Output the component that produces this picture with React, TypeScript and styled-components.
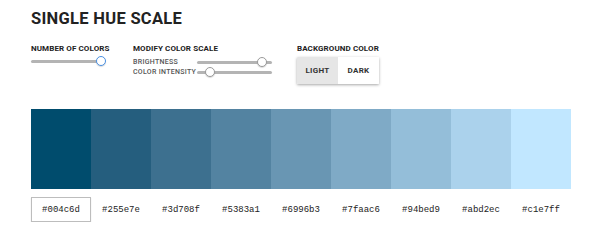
import styled, { createGlobalStyle } from "styled-components";

const colors = ["#004c6d", "#255e7e", "#3d708f", "#5383a1", "#6996b3", "#7faac6", "#94bed9", "#abd2ec", "#c1e7ff"];

const Global = createGlobalStyle`
  body {
    margin: 0;
    background: #ffffff;
    font-family: Roboto, "Liberation Sans", sans-serif;
    color: #222;
  }
`;

const Page = styled.div`
  padding: 9px 0 0 31px;
  width: 610px;
  box-sizing: border-box;
`;

const Title = styled.h1`
  margin: 0;
  font-size: 16.5px;
  font-weight: 700;
  letter-spacing: 0.3px;
  line-height: 20px;
  color: #222;
`;

const Controls = styled.div`
  display: flex;
  margin-top: 15px;
  height: 44px;
`;

const Group = styled.div<{ $w: number }>`
  width: ${({ $w }) => $w}px;
  display: flex;
  flex-direction: column;
`;

const Label = styled.div`
  font-size: 8px;
  font-weight: 700;
  letter-spacing: 0.1px;
  line-height: 10px;
  color: #222;
  white-space: nowrap;
`;

const SubGrid = styled.div`
  display: grid;
  grid-template-columns: auto 75px;
  grid-auto-rows: 10px;
  column-gap: 1px;
  align-items: center;
  justify-content: start;
  margin-top: 3px;
`;

const SubLabel = styled.div`
  font-size: 7px;
  letter-spacing: 0.3px;
  line-height: 10px;
  color: #555;
  font-weight: 500;
  white-space: nowrap;
`;

const Track = styled.div<{ $w: number }>`
  position: relative;
  width: ${({ $w }) => $w}px;
  height: 3px;
  border-radius: 2px;
  background: #b4b4b4;
`;

const Thumb = styled.div<{ $active?: boolean }>`
  position: absolute;
  top: -4px;
  width: 10px;
  height: 10px;
  margin-left: -5px;
  border-radius: 50%;
  box-sizing: border-box;
  background: #fff;
  border: ${({ $active }) => ($active ? "1.6px solid #4a90e2" : "1px solid #9a9a9a")};
  box-shadow: 0 1px 1px rgba(0, 0, 0, 0.15);
`;

const Toggle = styled.div`
  display: flex;
  margin-top: 3px;
  width: 82px;
  height: 27px;
  box-shadow: 0 1px 3px rgba(0, 0, 0, 0.35);
  border-radius: 1px;
  overflow: hidden;
`;

const ToggleBtn = styled.div<{ $on?: boolean }>`
  flex: 1;
  display: flex;
  align-items: center;
  justify-content: center;
  font-size: 8px;
  font-weight: 700;
  letter-spacing: 0.3px;
  color: #333;
  background: ${({ $on }) => ($on ? "#e6e6e6" : "#ffffff")};
`;

const Swatches = styled.div`
  display: flex;
  margin-top: 21px;
`;

const Swatch = styled.div<{ $c: string }>`
  width: 60px;
  height: 80px;
  background: ${({ $c }) => $c};
`;

const Codes = styled.div`
  display: flex;
  margin-top: 8px;
`;

const Code = styled.div<{ $sel?: boolean }>`
  width: 60px;
  height: 25px;
  box-sizing: border-box;
  display: flex;
  align-items: center;
  justify-content: center;
  font-family: "Liberation Mono", "DejaVu Sans Mono", monospace;
  font-size: 9px;
  color: #222;
  border: 1px solid ${({ $sel }) => ($sel ? "#bdbdbd" : "transparent")};
  box-shadow: ${({ $sel }) => ($sel ? "0 1px 1px rgba(0,0,0,0.15)" : "none")};
`;

export default function App() {
  return (
    <Page>
      <Global />
      <Title>SINGLE HUE SCALE</Title>
      <Controls>
        <Group $w={102}>
          <Label>NUMBER OF COLORS</Label>
          <Track $w={70} style={{ marginTop: 6 }}>
            <Thumb $active style={{ left: "100%" }} />
          </Track>
        </Group>
        <Group $w={164}>
          <Label>MODIFY COLOR SCALE</Label>
          <SubGrid>
            <SubLabel>BRIGHTNESS</SubLabel>
            <Track $w={75}>
              <Thumb style={{ left: "86%" }} />
            </Track>
            <SubLabel>COLOR INTENSITY</SubLabel>
            <Track $w={75}>
              <Thumb style={{ left: "17%" }} />
            </Track>
          </SubGrid>
        </Group>
        <Group $w={100}>
          <Label>BACKGROUND COLOR</Label>
          <Toggle>
            <ToggleBtn $on>LIGHT</ToggleBtn>
            <ToggleBtn>DARK</ToggleBtn>
          </Toggle>
        </Group>
      </Controls>
      <Swatches>
        {colors.map((c) => (
          <Swatch key={c} $c={c} />
        ))}
      </Swatches>
      <Codes>
        {colors.map((c, i) => (
          <Code key={c} $sel={i === 0}>
            {c}
          </Code>
        ))}
      </Codes>
    </Page>
  );
}
